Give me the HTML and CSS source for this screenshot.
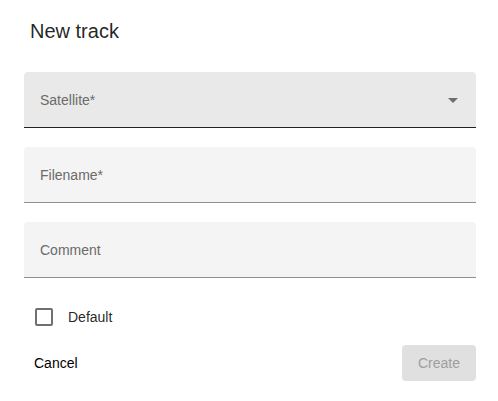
FILE: index.html
```html
<!DOCTYPE html>
<html>
<head>
<meta charset="utf-8">
<link rel="stylesheet" href="styles.css">
</head>
<body>
<div class="dialog">
  <h2 class="title">New track</h2>
  <div class="fields">
    <div class="field field-select">
      <span class="label">Satellite*</span>
      <span class="arrow"></span>
    </div>
    <div class="field">
      <span class="label">Filename*</span>
    </div>
    <div class="field">
      <span class="label">Comment</span>
    </div>
  </div>
  <div class="check-row">
    <span class="box"></span>
    <span class="check-label">Default</span>
  </div>
  <div class="actions">
    <button class="btn btn-text">Cancel</button>
    <button class="btn btn-disabled">Create</button>
  </div>
</div>
</body>
</html>
```
FILE: styles.css
```css
html, body {
  margin: 0;
  padding: 0;
  background: #ffffff;
}
body {
  font-family: "Liberation Sans", Arial, sans-serif;
  color: rgba(0, 0, 0, 0.87);
}
.dialog {
  width: 498px;
  height: 401px;
  box-sizing: border-box;
  padding: 15px 22px 0 24px;
  display: flex;
  flex-direction: column;
}
.title {
  margin: 0 0 25px 6px;
  font-size: 20px;
  font-weight: 400;
  line-height: 32px;
  color: rgba(0, 0, 0, 0.87);
}
.fields {
  display: flex;
  flex-direction: column;
  gap: 19px;
}
.field {
  height: 56px;
  box-sizing: border-box;
  background: #f4f4f4;
  border-radius: 4px 4px 0 0;
  border-bottom: 1px solid #8f8f8f;
  padding: 0 18px 0 16px;
  display: flex;
  align-items: center;
  justify-content: space-between;
}
.field-select {
  background: #e9e9e9;
  border-bottom-color: #222222;
}
.label {
  font-size: 14px;
  color: #6b6b6b;
}
.arrow {
  width: 0;
  height: 0;
  border-left: 5px solid transparent;
  border-right: 5px solid transparent;
  border-top: 5px solid #6e6e6e;
  margin-top: 1px;
}
.check-row {
  margin-top: 19px;
  height: 40px;
  display: flex;
  align-items: center;
}
.box {
  width: 18px;
  height: 18px;
  box-sizing: border-box;
  border: 2px solid #707070;
  border-radius: 2px;
  margin-left: 11px;
}
.check-label {
  margin-left: 15px;
  font-size: 14px;
  color: rgba(0, 0, 0, 0.87);
}
.actions {
  margin-top: 8px;
  display: flex;
  justify-content: space-between;
  align-items: center;
}
.btn {
  font-family: "Liberation Sans", Arial, sans-serif;
  font-size: 14px;
  height: 36px;
  border: none;
  border-radius: 4px;
  padding: 0 16px;
  background: transparent;
}
.btn-text {
  padding: 0 10px;
  color: #000000;
}
.btn-disabled {
  background: #e0e0e0;
  color: #9e9e9e;
}
```
